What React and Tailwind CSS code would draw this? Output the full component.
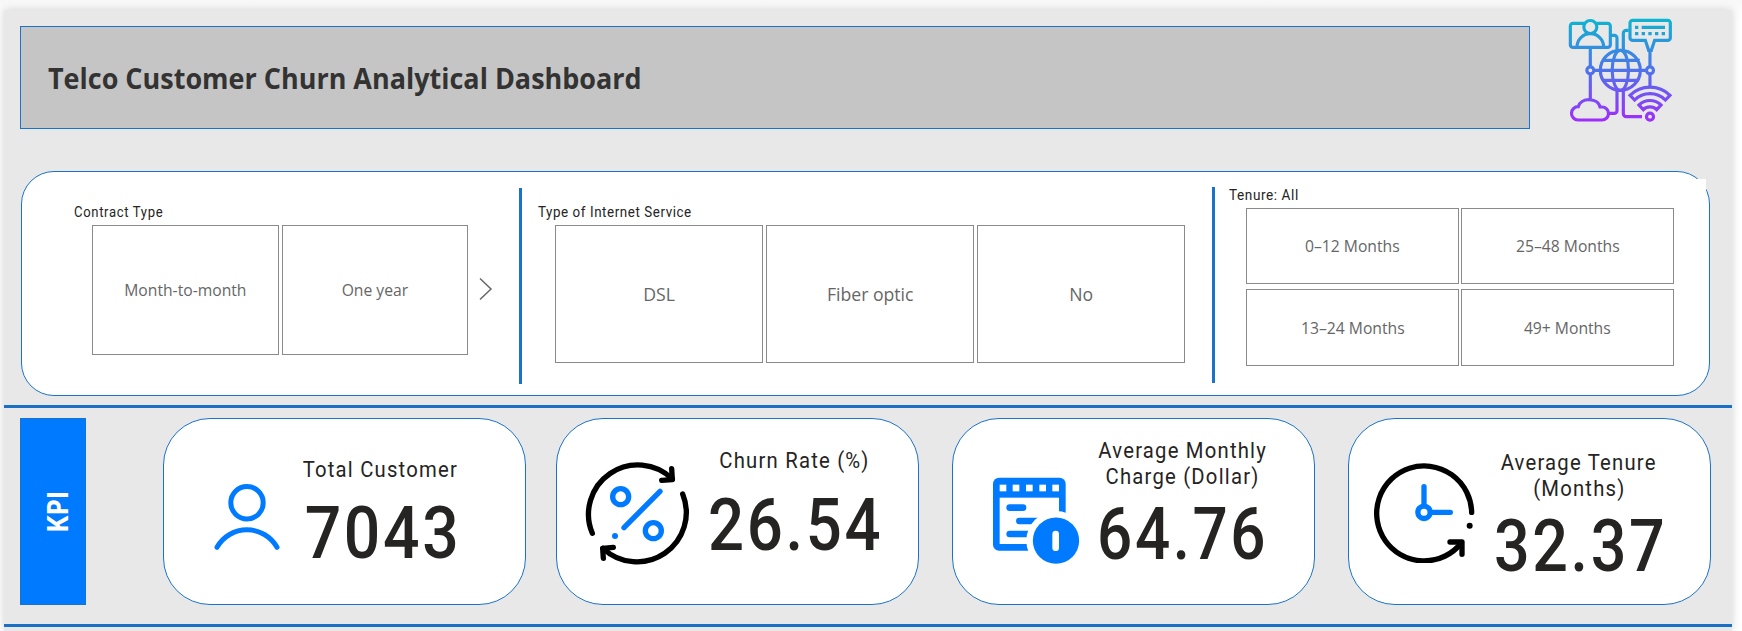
const DIN = "font-['Roboto',sans-serif]";
const SEGOE = "font-['Open_Sans','Noto_Sans',sans-serif]";

function NetworkLogo() {
  return (
    <svg className="h-[105px] w-[105px]" viewBox="204 54 315 315" fill="none" stroke="url(#net)" strokeWidth="9.5">
      <defs>
        <linearGradient id="net" gradientUnits="userSpaceOnUse" x1="0" y1="58" x2="0" y2="366">
          <stop offset="0" stopColor="#0eb4d0" />
          <stop offset="0.5" stopColor="#4f72ea" />
          <stop offset="1" stopColor="#a02cfc" />
        </linearGradient>
      </defs>
      <path d="M252 70H219a8 8 0 0 0-8 8v56a8 8 0 0 0 8 8h104a8 8 0 0 0 8-8V78a8 8 0 0 0-8-8H290" />
      <circle cx="271" cy="81" r="19.5" />
      <path d="M231 141A40 40 0 0 1 311 141" />
      <path d="M331 106H343a8 8 0 0 1 8 8V150M386 91H379a9 9 0 0 0-9 9V150" />
      <path d="M398 61H503a8 8 0 0 1 8 8V113a8 8 0 0 1-8 8H464L454 151H446L436 121H398a8 8 0 0 1-8-8V69a8 8 0 0 1 8-8Z" />
      <path strokeWidth="10" d="M405 82H415M425 82H495M405 101H415M425 101H435M445 101H455M465 101H475M485 101H495" />
      <path d="M270.9 146V198L271.1 198M270.9 224V298L271.1 298M449.9 150V198L450.1 198M449.9 224V260L450.1 260" />
      <path d="M284 210.9H437V211.1" />
      <circle cx="271" cy="211" r="10.5" />
      <circle cx="450" cy="211" r="10.5" />
      <circle cx="361" cy="211" r="60" />
      <ellipse cx="361" cy="211" rx="24.5" ry="60" />
      <path d="M307 180.9H415V181.1M307 240.9H415V241.1" />
      <path d="M234 360A20 20 0 0 1 235 320C242 292 294 292 300 321H306A19.5 19.5 0 0 1 306 360Z" />
      <path d="M326 340H343a8 8 0 0 0 8-8V272M370 272V341a9 9 0 0 0 9 9H426" />
      <circle cx="450" cy="350" r="10.5" />
      <path d="M390 286A86 86 0 0 1 510 286L496 300A65 65 0 0 0 404 300Z" />
      <path d="M417 315A47 47 0 0 1 483 315L470 329A28 28 0 0 0 430 329Z" />
    </svg>
  );
}

function PersonIcon() {
  return (
    <svg className="h-[68px] w-[68px]" viewBox="213 482 68 68" fill="none" stroke="#007bff" strokeWidth="5" strokeLinecap="round">
      <circle cx="247" cy="502.7" r="16.2" />
      <path d="M217 547.3A34.5 34.5 0 0 1 277 547.3" />
    </svg>
  );
}

function ChurnIcon() {
  return (
    <svg className="h-[105px] w-[105px]" viewBox="135 198 315 315" fill="none" stroke="#000" strokeWidth="16" strokeLinecap="round" strokeLinejoin="round">
      <path d="M157 415A148 148 0 0 1 397 252" />
      <path d="M395 221L397 254L365 256" />
      <path d="M428 297A148 148 0 0 1 189 460" />
      <path d="M190 490L188 460L220 457" />
      <g stroke="#007bff">
        <circle cx="242" cy="305" r="24" />
        <circle cx="340" cy="407" r="24" />
        <path d="M252 398L360 289" />
        <circle cx="225" cy="423" r="9" fill="#007bff" stroke="none" />
      </g>
    </svg>
  );
}

function BillIcon() {
  return (
    <svg className="h-[88px] w-[88px]" viewBox="187 244 264 264" fill="none" stroke="#007bff" strokeWidth="20" strokeLinecap="round">
      <rect x="190" y="246" width="218" height="219" rx="18" fill="#007bff" stroke="none" />
      <g fill="#fff" stroke="none">
        <rect x="210" y="306" width="178" height="139" />
        <rect x="210" y="267" width="20" height="20" />
        <rect x="249" y="267" width="20" height="20" />
        <rect x="289" y="267" width="20" height="20" />
        <rect x="329" y="267" width="20" height="20" />
        <rect x="368" y="267" width="20" height="20" />
      </g>
      <path d="M240 336H280M269 376H330M240 415H300" />
      <circle cx="379" cy="435" r="89" fill="#fff" stroke="none" />
      <circle cx="379" cy="435" r="69.5" fill="#007bff" stroke="none" />
      <path d="M378 415V456" stroke="#fff" />
    </svg>
  );
}

function ClockIcon() {
  return (
    <svg className="h-[102px] w-[102px]" viewBox="159 201 306 306" fill="none" stroke="#000" strokeWidth="16" strokeLinecap="round" strokeLinejoin="round">
      <path d="M455 355A142.5 142.5 0 1 0 424 447" />
      <path d="M390 444H426V481" />
      <circle cx="449" cy="395" r="9" fill="#000" stroke="none" />
      <g stroke="#007bff">
        <circle cx="312" cy="355" r="18.5" />
        <path d="M312 278V332M336 355H391" />
      </g>
    </svg>
  );
}

function Option({ className, children }) {
  return (
    <div className={`flex items-center justify-center whitespace-nowrap border border-[#8a8a8a] bg-white text-[#666] ${SEGOE} ${className}`}>
      <span className="scale-x-[0.98]">{children}</span>
    </div>
  );
}

function FilterTitle({ className, children }) {
  return (
    <div className={`origin-left whitespace-nowrap text-[14px] leading-[18px] text-[#252423] ${DIN} ${className}`}>
      {children}
    </div>
  );
}

function KpiCard({ className, iconClass, textClass, valueClass, icon, lines, value }) {
  return (
    <section className={`flex h-[187px] w-[363px] shrink-0 items-start rounded-[47px] border border-[#1a73c9] bg-white ${className}`}>
      <div className={`shrink-0 ${iconClass}`}>{icon}</div>
      <div className={`flex shrink-0 flex-col items-center whitespace-nowrap text-[#252423] ${DIN} ${textClass}`}>
        {lines.map((line) => (
          <div key={line} className="scale-x-[0.9] text-[22.5px] leading-[26px] tracking-[1.35px]">
            {line}
          </div>
        ))}
        <div className={`text-[73px] leading-[82px] font-medium tracking-[3px] ${valueClass}`}>{value}</div>
      </div>
    </section>
  );
}

export default function App() {
  return (
    <div className="h-[631px] w-[1742px] overflow-hidden bg-linear-to-b from-[#f8f8f8] to-white to-3% pt-[10px] pl-[4px]">
      <main className="flex h-[621px] w-[1728px] flex-col bg-[#e8e8e8] shadow-[0_0_9px_rgba(0,0,0,0.18)]">
        <header className="flex h-[161px] shrink-0 pl-[16px]">
          <div className="mt-[16px] flex h-[103px] w-[1510px] items-center border border-[#1a73c9] bg-[#c5c5c5] pl-[27px]">
            <h1 className={`origin-left scale-x-[0.93] text-[29px] font-bold whitespace-nowrap text-[#333] ${SEGOE}`}>
              Telco Customer Churn Analytical Dashboard
            </h1>
          </div>
          <div className="mt-[8px] ml-[38px]">
            <NetworkLogo />
          </div>
        </header>

        <section className="ml-[17px] flex h-[225px] w-[1689px] shrink-0 rounded-[33px] border border-[#1a73c9] bg-white">
          <div className="mt-[31px] ml-[52px] w-[445px] shrink-0">
            <FilterTitle className="scale-x-[0.935] tracking-[0.7px]">Contract Type</FilterTitle>
            <div className="mt-[4px] ml-[18px] flex items-center gap-[3px]">
              <Option className="h-[130px] w-[187px] text-[16px]">Month-to-month</Option>
              <Option className="h-[130px] w-[186px] text-[16px]">One year</Option>
              <svg className="mb-[3px] ml-[8px] h-[24px] w-[14px]" viewBox="0 0 14 24" fill="none" stroke="#666" strokeWidth="1.5">
                <path d="M1 1.5L12 12L1 22.5" />
              </svg>
            </div>
          </div>
          <div className="mt-[16px] h-[196px] w-[3px] shrink-0 bg-[#1a73c9]" />
          <div className="mt-[31px] ml-[16px] w-[674px] shrink-0">
            <FilterTitle className="scale-x-[0.955] tracking-[0.6px]">Type of Internet Service</FilterTitle>
            <div className="mt-[4px] ml-[17px] flex gap-[3px]">
              <Option className="h-[138px] w-[208px] text-[18px]">DSL</Option>
              <Option className="h-[138px] w-[208px] text-[18px]">Fiber optic</Option>
              <Option className="h-[138px] w-[208px] text-[18px]">No</Option>
            </div>
          </div>
          <div className="mt-[15px] h-[196px] w-[3px] shrink-0 bg-[#1a73c9]" />
          <div className="mt-[7px] h-[180px] w-[491px] shrink-0 bg-white pt-[7px] pl-[14px]">
            <FilterTitle className="scale-x-[0.97] tracking-[0.6px]">Tenure: All</FilterTitle>
            <div className="mt-[4px] ml-[17px] grid w-[428px] grid-cols-2 gap-x-[2px] gap-y-[5px]">
              <Option className="h-[76px] text-[16px]">0–12 Months</Option>
              <Option className="h-[76px] text-[16px]">25–48 Months</Option>
              <Option className="h-[77px] text-[16px]">13–24 Months</Option>
              <Option className="h-[77px] text-[16px]">49+ Months</Option>
            </div>
          </div>
        </section>

        <div className="mt-[9px] h-[3px] shrink-0 bg-[#1a70c4]" />

        <div className="mt-[10px] ml-[16px] flex h-[188px] shrink-0">
          <div className="flex h-[187px] w-[66px] shrink-0 items-center justify-center border border-[#1a73c9] bg-[#007bff] pl-[7px]">
            <span className={`rotate-180 text-[28px] leading-[30px] font-bold text-white [writing-mode:vertical-rl] scale-y-[0.93] ${SEGOE}`}>KPI</span>
          </div>
          <KpiCard className="ml-[77px]" iconClass="ml-[49px] mt-[63px]" textClass="ml-[19px] mt-[37px] w-[160px]" valueClass="mt-[10px] ml-[5px] scale-x-[0.88]" icon={<PersonIcon />} lines={["Total Customer"]} value="7043" />
          <KpiCard className="ml-[30px]" iconClass="ml-[28px] mt-[42px]" textClass="ml-[14px] mt-[28px] w-[180px]" valueClass="mt-[11px] ml-[4px] scale-x-[0.87]" icon={<ChurnIcon />} lines={["Churn Rate (%)"]} value="26.54" />
          <KpiCard className="ml-[33px]" iconClass="ml-[39px] mt-[58px]" textClass="ml-[13px] mt-[18px] w-[180px]" valueClass="mt-[4px] scale-x-[0.85]" icon={<BillIcon />} lines={["Average Monthly", "Charge (Dollar)"]} value="64.76" />
          <KpiCard className="ml-[33px]" iconClass="ml-[24px] mt-[42px]" textClass="ml-[14px] mt-[30px] w-[180px]" valueClass="mt-[4px] ml-[4px] scale-x-[0.86]" icon={<ClockIcon />} lines={["Average Tenure", "(Months)"]} value="32.37" />
        </div>

        <div className="mt-[18px] h-[3px] shrink-0 bg-[#1a70c4]" />
      </main>
    </div>
  );
}
